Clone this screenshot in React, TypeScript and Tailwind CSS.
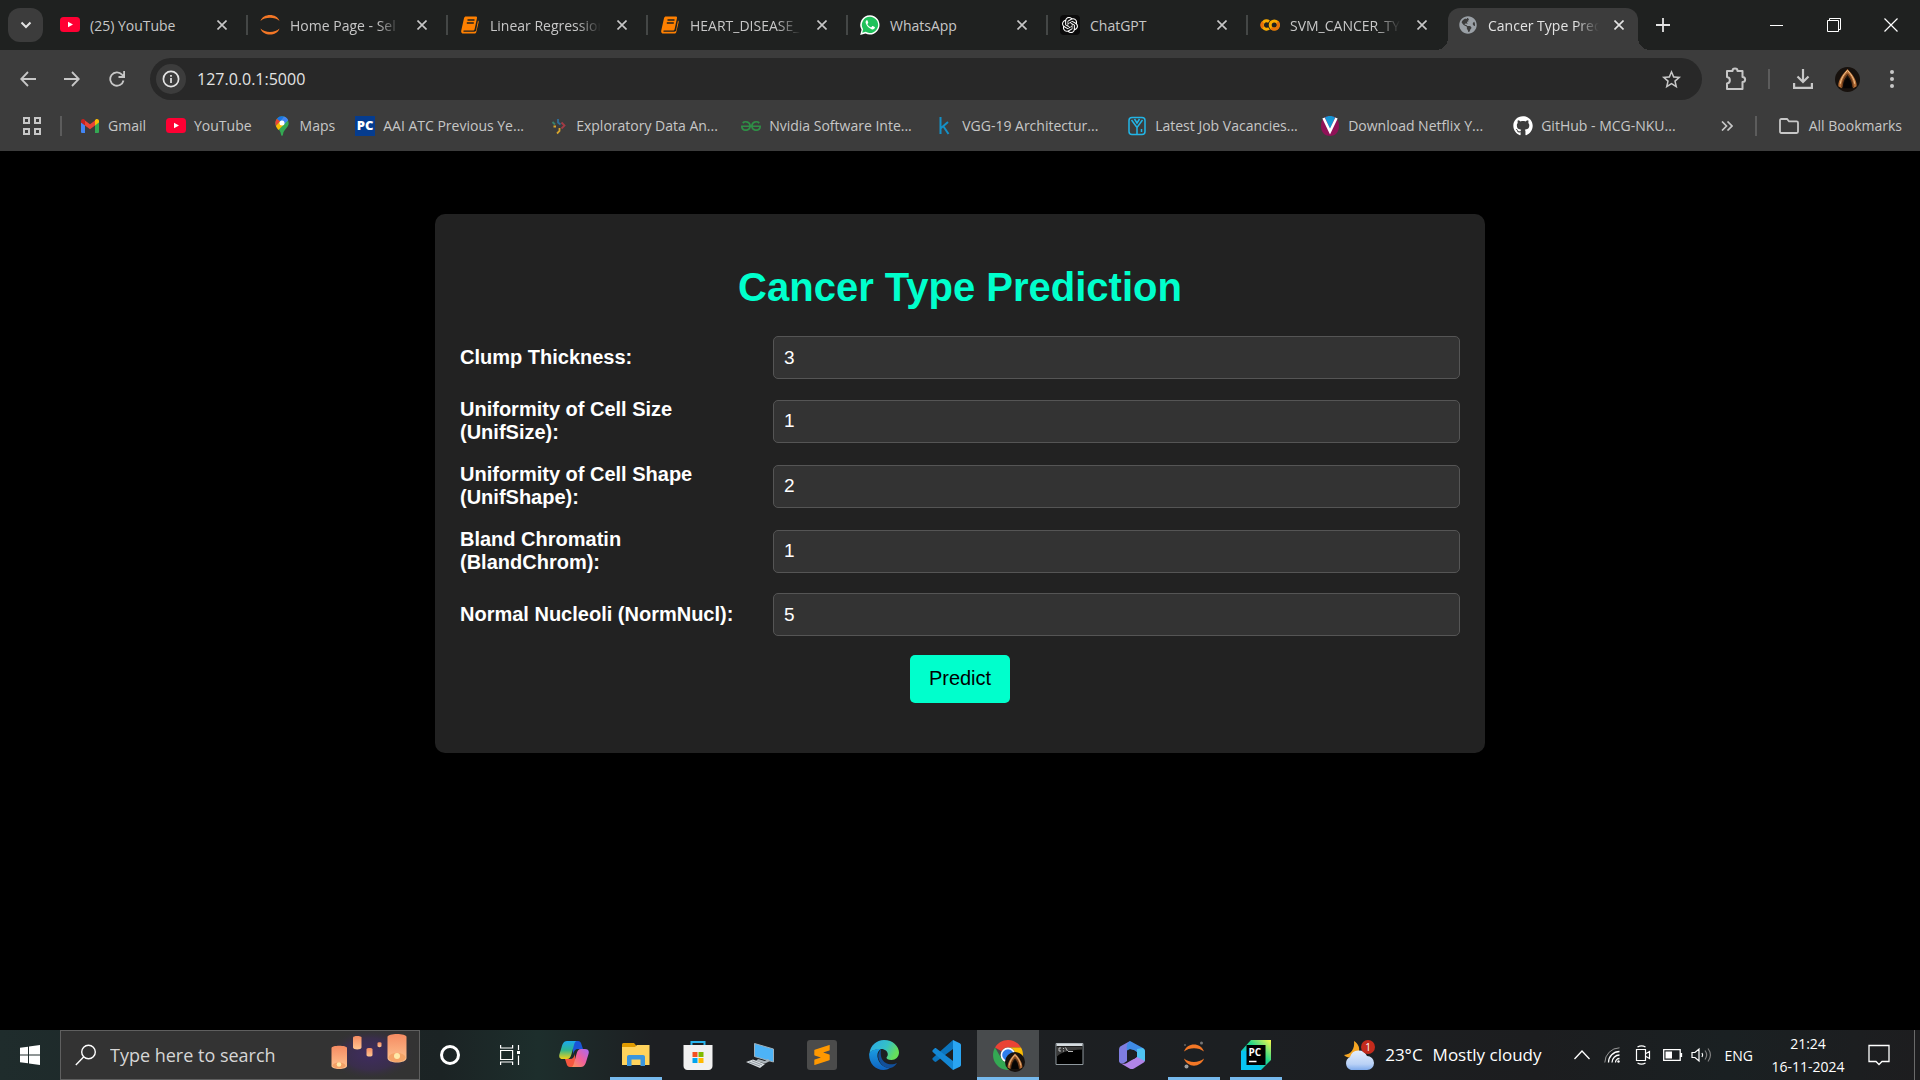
import React from "react";
import { FaGithub, FaGlobeAmericas } from "react-icons/fa";
import { SiOpenai, SiGeeksforgeeks, SiSublimetext } from "react-icons/si";
import { MdStarBorder } from "react-icons/md";

/* ---------- favicons ---------- */

const YouTube = () => (
  <svg viewBox="0 0 20 20" className="size-5">
    <rect x="0" y="2" width="20" height="15" rx="3.5" fill="#ff0033" />
    <path d="M8 6.7 13 9.5l-5 2.8z" fill="#fff" />
  </svg>
);

const JupyterArcs = () => (
  <svg viewBox="0 0 20 20" className="size-5" fill="#f37726">
    <path d="M0.5 6C3 -2 17 -2 19.5 6 15 1.6 5 1.6 .5 6z" />
    <path d="M0.5 13.500C3 21.5 17 21.5 19.5 13.5 15 18 5 18 .5 13.500z" />
  </svg>
);

const Notebook = () => (
  <svg viewBox="0 0 20 20" className="size-5">
    <path
      d="M6 1.500h9.700c1 0 1.500.6 1.300 1.500l-2.400 11.200c-.2.900-.8 1.400-1.800 1.400H4c-.9 0-1 1.100 0 1.100h10.300c1 0 1.500-.4 1.800-1.400L18 5.500c.6.500.8 1 .6 1.700l-2.300 9.800c-.3 1.200-1 1.600-2 1.600H3.400c-1.600 0-2.600-1.400-2.200-2.900L4 3.300C4.300 2 5 1.500 6 1.500z"
      fill="#ff8000"
    />
    <path d="M7.500 5h7M6.800 8h7" stroke="#1f2120" strokeWidth="1.3" />
  </svg>
);

const WhatsApp = () => (
  <svg viewBox="0 0 20 20" className="size-5">
    <path d="M10 .2a9.700 9.700 0 0 0-8.400 14.600L.2 20l5.300-1.400A9.700 9.700 0 1 0 10 .2z" fill="#fff" />
    <path d="M10 1.800a8.100 8.100 0 0 0-6.900 12.400l-.9 3.500 3.600-.9A8.100 8.100 0 1 0 10 1.800z" fill="#1fc15b" />
    <path
      d="M6.600 5.300c-.8.700-1.200 1.700-.9 2.800.8 3 3.300 5.400 6.300 6.300 1.200.3 2.400-.3 2.800-1.300.2-.6.2-.9-.1-1.100l-1.900-.9c-.3-.1-.5 0-.7.200l-.7.900c-.2.200-.4.200-.7.100a6.500 6.500 0 0 1-3.200-2.900c-.1-.3-.1-.4.100-.6l.6-.8c.1-.2.1-.4 0-.6L7.500 5.500c-.2-.4-.6-.4-.9-.2z"
      fill="#fff"
    />
  </svg>
);

const ChatGpt = () => (
  <span className="flex size-5 items-center justify-center rounded bg-[#0b0b0b] text-white">
    <SiOpenai className="size-4" />
  </span>
);

const Colab = () => (
  <svg viewBox="0 0 20 20" className="size-5" fill="none" strokeWidth="3">
    <path d="M9 6.600A4.200 4.200 0 1 0 9 13.400" stroke="#f9ab00" />
    <path d="M3 7.200a4.200 4.200 0 0 0 0 5.600" stroke="#e8710a" />
    <circle cx="14.3" cy="10" r="4.1" stroke="#f9ab00" />
    <path d="M11.400 12.900a4.100 4.100 0 0 0 5.800-5.800" stroke="#e8710a" />
  </svg>
);

const Globe = () => (
  <span className="flex size-5 items-center justify-center text-[#9aa0a6]">
    <FaGlobeAmericas className="size-[18px]" />
  </span>
);

const Gmail = () => (
  <svg viewBox="0 0 20 20" className="size-5">
    <path d="M1 17V6l4 3v8H2a1 1 0 0 1-1-1z" fill="#4285f4" />
    <path d="M15 17V9l4-3v10a1 1 0 0 1-1 1z" fill="#34a853" />
    <path d="M5 9.500V4.500l5 3.800 5-3.800v5l-5 3.800z" fill="#ea4335" />
    <path d="M1 6.500V5c0-1.900 2-2.700 3.300-1.600l.7.600v5.500z" fill="#c5221f" />
    <path d="M19 6.500V5c0-1.900-2-2.700-3.300-1.600l-.7.600v5.500z" fill="#fbbc04" />
  </svg>
);

const Maps = () => (
  <svg viewBox="0 0 20 20" className="size-5">
    <path d="M10 .3a6.700 6.700 0 0 0-6.700 6.700c0 4.800 5 6 5.700 11.400.2 1.700 1.800 1.700 2 0C11.700 13 16.700 11.800 16.700 7A6.700 6.700 0 0 0 10 .3z" fill="#34a853" />
    <path d="M10 .3c2.800 0 5.200 1.600 6.200 4L12 8.600 7.800 5.400l4-4.900z" fill="#4285f4" />
    <path d="M4.900 2.700A6.700 6.700 0 0 1 12 .6L7.800 5.600z" fill="#1a73e8" />
    <path d="M4.900 2.700 8.200 5.500 3.900 10C3 7.500 3.100 4.800 4.900 2.700z" fill="#ea4335" />
    <path d="m12 8.600-5.600 5.500C5.400 12.700 4.400 11.500 3.900 10l4-4.600z" fill="#fbbc04" />
    <circle cx="10" cy="7" r="2.5" fill="#fff" />
  </svg>
);

const PcBadge = () => (
  <span className="flex size-5 items-center justify-center bg-[#053c8f] font-['Open_Sans',sans-serif] text-[13px] font-extrabold text-white">
    PC
  </span>
);

const Chevrons = () => (
  <svg viewBox="0 0 20 20" className="size-5" fill="none" strokeWidth="1.8">
    <path d="M10 3v3.500l2.500 2" stroke="#2f6f9a" />
    <path d="M4.500 6 7 8.500" stroke="#39806d" />
    <path d="m13.500 6.500 3 3-3 3" stroke="#a33b45" />
    <path d="M5.500 10.500H8M9 17.500l2.500-2.500v-3" stroke="#d8a52c" />
  </svg>
);

const Kaggle = () => (
  <svg viewBox="0 0 20 20" className="size-5" fill="none" stroke="#1490c6" strokeWidth="2">
    <path d="M6.500 1v17M14 6l-7.500 6.500M9.500 10.500l5 7.500" />
  </svg>
);

const Jobs = () => (
  <svg viewBox="0 0 20 20" className="size-5" fill="none" stroke="#22b5e6" strokeWidth="1.5">
    <rect x="2" y="1.500" width="16" height="17" rx="3" />
    <path d="m4.500 4 5.500 7.500L15.500 4M10 11.500V18M7.500 3l2.500 4 2.500-4M14.500 13v3" />
  </svg>
);

const Vid = () => (
  <svg viewBox="0 0 20 20" className="size-5">
    <path d="M10 0C4 0 1 4 1 10s3.500 10 9 10 9-4 9-10S16 0 10 0z" fill="#8f1257" />
    <path d="M5 1.500C7-.5 13-.5 15 1.500L10 13z" fill="#1597d4" />
    <path d="m3.500 2 6.500 13.500L16.500 2" fill="none" stroke="#fff" strokeWidth="2.6" />
  </svg>
);

/* ---------- tab strip ---------- */

const Cross = () => (
  <svg viewBox="0 0 10 10" className="size-[10px]" fill="none" stroke="currentColor">
    <path d="m.5.5 9 9M9.500.5l-9 9" strokeWidth="1.6" />
  </svg>
);

type TabInfo = { title: string; icon: React.ReactNode; fade?: boolean };

const tabs: TabInfo[] = [
  { title: "(25) YouTube", icon: <YouTube /> },
  { title: "Home Page - Sel", icon: <JupyterArcs />, fade: true },
  { title: "Linear Regression", icon: <Notebook />, fade: true },
  { title: "HEART_DISEASE_", icon: <Notebook />, fade: true },
  { title: "WhatsApp", icon: <WhatsApp /> },
  { title: "ChatGPT", icon: <ChatGpt /> },
  { title: "SVM_CANCER_TY", icon: <Colab />, fade: true },
];

function TabTitle({ title, fade }: { title: string; fade?: boolean }) {
  return (
    <span
      className={
        fade
          ? "ml-[10px] w-[112px] whitespace-nowrap [mask-image:linear-gradient(90deg,#000_78%,transparent_99%)]"
          : "ml-[10px] w-[112px] whitespace-nowrap"
      }
    >
      {title}
    </span>
  );
}

function Tab({ title, icon, fade, last }: TabInfo & { last: boolean }) {
  return (
    <div className="flex h-[50px] w-[200px] shrink-0 items-center pl-3 text-[#c7c7c7]">
      {icon}
      <TabTitle title={title} fade={fade} />
      <button aria-label="Close tab" className="ml-[15px]">
        <Cross />
      </button>
      {!last && <span className="ml-auto h-5 w-[2px] bg-[#444746]" />}
    </div>
  );
}

function ActiveTab() {
  return (
    <div className="relative mt-2 flex h-[42px] w-[190px] shrink-0 items-center rounded-t-xl bg-[#3c3c3c] pb-2 pl-[10px] text-[#e3e3e3]">
      <span className="absolute -left-3 bottom-0 size-3 bg-[radial-gradient(circle_at_0_0,transparent_12px,#3c3c3c_12px)]" />
      <span className="absolute -right-3 bottom-0 size-3 bg-[radial-gradient(circle_at_100%_0,transparent_12px,#3c3c3c_12px)]" />
      <Globe />
      <TabTitle title="Cancer Type Pred" fade />
      <button aria-label="Close tab" className="ml-[14px]">
        <Cross />
      </button>
    </div>
  );
}

function TabStrip() {
  return (
    <div className="flex h-[50px] items-center bg-[#1f2120] pl-2 text-[14px]">
      <button aria-label="Search tabs" className="mr-[5px] flex h-[34px] w-[35px] shrink-0 items-center justify-center rounded-xl bg-[#3c3c3c] text-[#e3e3e3]">
        <svg viewBox="0 0 12 12" className="size-3" fill="none" stroke="currentColor" strokeWidth="2">
          <path d="m1.500 3.500 4.500 4.500 4.500-4.500" />
        </svg>
      </button>
      {tabs.map((t, i) => (
        <Tab key={t.title} {...t} last={i === tabs.length - 1} />
      ))}
      <ActiveTab />
      <button aria-label="New tab" className="ml-[18px] text-[#e3e3e3]">
        <svg viewBox="0 0 14 14" className="size-[14px]" stroke="currentColor" strokeWidth="1.8">
          <path d="M7 0v14M0 7h14" />
        </svg>
      </button>
      <div className="ml-auto flex items-center pr-[1px] text-white">
        <button aria-label="Minimize" className="flex h-[50px] w-[57px] items-center justify-center">
          <span className="h-px w-[13px] bg-white" />
        </button>
        <button aria-label="Restore" className="flex h-[50px] w-[57px] items-center justify-center">
          <svg viewBox="0 0 14 14" className="size-[14px]" fill="none" stroke="currentColor">
            <path d="M.5 2.500h11v11H.5zM2.500 2.500v-2h11v11h-2" />
          </svg>
        </button>
        <button aria-label="Close" className="flex h-[50px] w-[57px] items-center justify-center">
          <svg viewBox="0 0 14 14" className="size-[14px]" fill="none" stroke="currentColor" strokeWidth="1.2">
            <path d="m.5.5 13 13M13.500.5l-13 13" />
          </svg>
        </button>
      </div>
    </div>
  );
}

/* ---------- toolbar ---------- */

const Avatar = () => (
  <svg viewBox="0 0 26 26" className="size-full">
    <circle cx="13" cy="13" r="13" fill="#17110d" />
    <path d="M13 2C8 7 3 14 3.500 20l3.500 2c0-6 2-10 6-14 4 4 6 8 6 14l3.500-2C23 14 18 7 13 2z" fill="#b87038" />
    <path d="M13 3.500c-4 4-7 9-7.500 14M13 3.500c4 4 7 9 7.500 14" fill="none" stroke="#f3c48e" strokeWidth="1" />
    <path d="M13 7c-3.500 3.500-5.500 8-5.800 14M13 7c3.500 3.500 5.500 8 5.800 14" fill="none" stroke="#6b3a19" strokeWidth="1.5" />
    <path d="M13 11c-3 3-4.500 6-4.500 11h9c0-5-1.500-8-4.500-11z" fill="#050404" />
  </svg>
);

function Toolbar() {
  return (
    <div className="flex h-[58px] items-center bg-[#3c3c3c] pl-5 pr-[26px] text-[#c7c7c7]">
      <button aria-label="Back">
        <svg viewBox="0 0 16 16" className="size-4" fill="none" stroke="currentColor" strokeWidth="1.8">
          <path d="M16 8H1.500M8 1 1.200 8 8 15" />
        </svg>
      </button>
      <button aria-label="Forward" className="ml-7">
        <svg viewBox="0 0 16 16" className="size-4" fill="none" stroke="currentColor" strokeWidth="1.8">
          <path d="M0 8h14.500M8 1l6.800 7L8 15" />
        </svg>
      </button>
      <button aria-label="Reload" className="ml-[29px]">
        <svg viewBox="0 0 16 16" className="size-4" fill="none" stroke="currentColor" strokeWidth="1.8">
          <path d="M14.500 9.500A6.700 6.700 0 1 1 13 3.600L15 5.500M15.100 0v6H9.500" />
        </svg>
      </button>
      <div className="ml-[25px] flex h-[42px] min-w-0 flex-1 items-center rounded-full bg-[#282828] pl-[6px] pr-[19px]">
        <button aria-label="Site information" className="flex size-[30px] shrink-0 items-center justify-center rounded-full bg-[#3c3c3c] text-[#e3e3e3]">
          <svg viewBox="0 0 18 18" className="size-[18px]" fill="none" stroke="currentColor" strokeWidth="1.7">
            <circle cx="9" cy="9" r="7.6" />
            <path d="M9 8v5M9 5v1.700" />
          </svg>
        </button>
        <input aria-label="Address" defaultValue="127.0.0.1:5000" className="ml-[11px] min-w-0 flex-1 bg-transparent text-[16px] text-[#e3e3e3] outline-none" />
        <button aria-label="Bookmark this page">
          <MdStarBorder className="size-[23px]" />
        </button>
      </div>
      <button aria-label="Extensions" className="ml-[23px]">
        <svg viewBox="0 0 22 24" className="h-6 w-[22px]" fill="none" stroke="currentColor" strokeWidth="2">
          <path d="M2 4h5.500c0-3.300 5-3.300 5 0H17.500v6c3.500 0 3.500 5 0 5v7H2v-5.500c3.800-.5 3.800-6 0-6.500z" strokeLinejoin="round" />
        </svg>
      </button>
      <span className="ml-[21px] h-5 w-[2px] bg-[#5c5c5c]" />
      <button aria-label="Downloads" className="ml-[23px]">
        <svg viewBox="0 0 20 20" className="size-5" fill="none" stroke="currentColor" strokeWidth="2.2">
          <path d="M10 0v12.500M4.500 7.500 10 13l5.500-5.500M1.100 14v4.900h17.800V14" />
        </svg>
      </button>
      <button aria-label="Profile" className="ml-[22px] size-[25px]">
        <Avatar />
      </button>
      <button aria-label="Menu" className="ml-[30px]">
        <svg viewBox="0 0 4 18" className="h-[18px] w-1" fill="currentColor">
          <circle cx="2" cy="2" r="2" />
          <circle cx="2" cy="9" r="2" />
          <circle cx="2" cy="16" r="2" />
        </svg>
      </button>
    </div>
  );
}

const shortMarks = [
  { title: "Gmail", icon: <Gmail /> },
  { title: "YouTube", icon: <YouTube /> },
  { title: "Maps", icon: <Maps /> },
];

const longMarks = [
  { title: "AAI ATC Previous Ye...", icon: <PcBadge /> },
  { title: "Exploratory Data An...", icon: <Chevrons /> },
  { title: "Nvidia Software Inte...", icon: <SiGeeksforgeeks className="size-5 text-[#2f8d46]" /> },
  { title: "VGG-19 Architectur...", icon: <Kaggle /> },
  { title: "Latest Job Vacancies...", icon: <Jobs /> },
  { title: "Download Netflix Y...", icon: <Vid /> },
  { title: "GitHub - MCG-NKU...", icon: <FaGithub className="size-5 text-white" /> },
];

function Bookmarks() {
  return (
    <nav className="flex h-[43px] items-center whitespace-nowrap bg-[#3c3c3c] pb-2 pl-[22px] pr-[18px] text-[14px] text-[#c7c7c7]">
      <button aria-label="Apps">
        <svg viewBox="0 0 20 20" className="size-5" fill="none" stroke="currentColor" strokeWidth="2">
          <path d="M2 2h5v5H2zM13 2h5v5h-5zM2 13h5v5H2zM13 13h5v5h-5z" />
        </svg>
      </button>
      <span className="mx-[18px] h-5 w-[2px] bg-[#5c5c5c]" />
      <div className="flex gap-5">
        {shortMarks.map((m) => (
          <a key={m.title} href="#" className="flex items-center gap-2">
            {m.icon}
            <span>{m.title}</span>
          </a>
        ))}
        {longMarks.map((m) => (
          <a key={m.title} href="#" className="flex items-center gap-2">
            {m.icon}
            <span className="w-[145px]">{m.title}</span>
          </a>
        ))}
      </div>
      <button aria-label="More bookmarks" className="ml-auto">
        <svg viewBox="0 0 12 10" className="h-[10px] w-3" fill="none" stroke="currentColor" strokeWidth="1.7">
          <path d="m1 .5 4.500 4.500L1 9.500M6.500.5 11 5 6.500 9.500" />
        </svg>
      </button>
      <span className="ml-[22px] h-5 w-[2px] bg-[#5c5c5c]" />
      <a href="#" className="ml-[22px] flex items-center gap-[10px]">
        <svg viewBox="0 0 20 16" className="h-4 w-5" fill="none" stroke="currentColor" strokeWidth="1.8">
          <path d="M1 13.500v-11C1 1.600 1.500 1 2.400 1H8l2 2.300h7.600c.9 0 1.400.6 1.400 1.400v8.800c0 .9-.5 1.500-1.400 1.500H2.400C1.500 15 1 14.400 1 13.500z" />
        </svg>
        <span>All Bookmarks</span>
      </a>
    </nav>
  );
}

/* ---------- page ---------- */

const fields = [
  { id: "clump", label: "Clump Thickness:", value: "3" },
  { id: "unifsize", label: "Uniformity of Cell Size (UnifSize):", value: "1" },
  { id: "unifshape", label: "Uniformity of Cell Shape (UnifShape):", value: "2" },
  { id: "blandchrom", label: "Bland Chromatin (BlandChrom):", value: "1" },
  { id: "normnucl", label: "Normal Nucleoli (NormNucl):", value: "5" },
];

function PredictionPage() {
  return (
    <main className="flex-1 bg-black pt-[63px] font-['Liberation_Sans',Arial,sans-serif]">
      <div className="mx-auto max-w-[1050px] rounded-[10px] bg-[#222222] px-[25px] py-[50px]">
        <h1 className="mb-[26px] text-center text-[40px] font-bold leading-[46px] text-[#00ffcc]">
          Cancer Type Prediction
        </h1>
        <form className="flex flex-col gap-[19px]" onSubmit={(e) => e.preventDefault()}>
          {fields.map((f) => (
            <div key={f.id} className="flex items-center">
              <label htmlFor={f.id} className="w-[300px] shrink-0 text-[20px] font-bold leading-[23px] text-white">
                {f.label}
              </label>
              <input
                id={f.id}
                defaultValue={f.value}
                className="ml-[13px] h-[43px] min-w-0 flex-1 rounded-[5px] border border-[#555555] bg-[#333333] px-[10px] text-[19px] text-white outline-none"
              />
            </div>
          ))}
          <button className="mx-auto h-12 w-[100px] rounded-[5px] bg-[#00ffcc] pb-[2px] text-[20px] text-black">Predict</button>
        </form>
      </div>
    </main>
  );
}

/* ---------- taskbar ---------- */

const Lanterns = () => (
  <svg viewBox="0 0 90 48" className="h-12 w-[90px]">
    <defs>
      <radialGradient id="glow">
        <stop offset="0" stopColor="#3f2c60" />
        <stop offset=".6" stopColor="#3a2e4c" />
        <stop offset="1" stopColor="#333333" stopOpacity="0" />
      </radialGradient>
      <linearGradient id="lamp" x1="0" y1="0" x2="0" y2="1">
        <stop offset="0" stopColor="#f58b62" />
        <stop offset="1" stopColor="#ffc591" />
      </linearGradient>
    </defs>
    <ellipse cx="42" cy="23" rx="44" ry="26" fill="url(#glow)" />
    <g fill="url(#lamp)">
      <path d="M2.500 17c0-3 15.500-3 15.500 0v18c0 4-15.500 4-15.500 0z" />
      <path d="M24 6.500c0-2 8.500-2 8.500 0v10c0 2.500-8.500 2.500-8.500 0z" />
      <path d="M37.500 18c0-1.500 6-1.500 6 0v6c0 2-6 2-6 0z" />
      <path d="M48.500 12c0-1 4-1 4 0v3c0 1.500-4 1.500-4 0z" />
      <path d="M58.500 6c0-4 19-4 19 0v21c0 6-19 6-19 0z" />
    </g>
    <ellipse cx="10" cy="34.500" rx="6.500" ry="3" fill="#f3a066" />
    <ellipse cx="68" cy="26.500" rx="8.500" ry="4.500" fill="#f5a468" />
    <circle cx="10" cy="33.500" r="2.300" fill="#ffe9a8" />
    <circle cx="68" cy="25" r="3" fill="#ffe9a8" />
  </svg>
);

const Copilot = () => (
  <svg viewBox="0 0 30 30" className="size-[30px]">
    <defs>
      <linearGradient id="cpA" x1="0" y1="0" x2="0" y2="1">
        <stop offset="0" stopColor="#1aa7f0" />
        <stop offset=".5" stopColor="#2fb58f" />
        <stop offset="1" stopColor="#f2d117" />
      </linearGradient>
      <linearGradient id="cpB" x1="1" y1="0" x2="0" y2="1">
        <stop offset="0" stopColor="#a76af5" />
        <stop offset=".5" stopColor="#f0609c" />
        <stop offset="1" stopColor="#fb9a52" />
      </linearGradient>
    </defs>
    <path d="M14 1h5c2 0 3 1.500 3.500 3.500L24 9h-5c-3 0-4 2-5 5z" fill="#1a55d8" />
    <path d="M16 27h-5c-2 0-3-1.500-3.500-3.500L6 19h5c3 0 4-2 5-5z" fill="#f4573f" />
    <path d="M18 1H8C4.500 1 3.500 4 2.500 7.500L.5 14c-1 3.500.5 5 3.500 5h4c2.500 0 3.500-1.500 4.500-5l2.500-9c.6-2.400 1.500-4 3-4z" fill="url(#cpA)" />
    <path d="M12 27h10c3.500 0 4.500-3 5.500-6.500l2-6.500c1-3.500-.5-5-3.500-5h-4c-2.500 0-3.500 1.500-4.500 5L15 23c-.6 2.400-1.500 4-3 4z" fill="url(#cpB)" />
  </svg>
);

const Explorer = () => (
  <svg viewBox="0 0 30 30" className="size-[30px]">
    <path d="M1 4.500C1 4 1.500 3 2.500 3H13l2.500 3V12H1z" fill="#e09b00" />
    <path d="M1 7h13l2-2h12.500v20H1z" fill="#ffd35c" />
    <path d="M6 26V17c0-1.200.8-2 2-2h14c1.200 0 2 .8 2 2v9h-4.500v-6.500h-9V26z" fill="#3a95dd" />
  </svg>
);

const Store = () => (
  <svg viewBox="0 0 30 30" className="size-[30px]">
    <path d="M8.500 7V2h13v5" fill="none" stroke="#28b4ee" strokeWidth="2" />
    <path d="M.5 5h29v21c0 2-1.500 4-4 4h-21c-2.500 0-4-2-4-4z" fill="#f1f1f1" />
    <path d="M9.500 12h5v5h-5z" fill="#f25022" />
    <path d="M15.500 12h5v5h-5z" fill="#7fba00" />
    <path d="M9.500 18h5v5h-5z" fill="#00a4ef" />
    <path d="M15.500 18h5v5h-5z" fill="#ffb900" />
  </svg>
);

const RemotePc = () => (
  <svg viewBox="0 0 30 30" className="size-[30px]">
    <path d="m9.500 3.500 19 5.500v13L9.500 16.500z" fill="#4db3f7" stroke="#9fb0bb" strokeWidth="1" />
    <path d="m13 19 7 2 3-2 2 2-5 2.500-9-2.500z" fill="#aab2b8" />
    <path d="m1 22 7-2.500L20 24l-5 4z" fill="#d7dce0" />
    <path d="m4 22 11 4M7 20.800l10 4" stroke="#7f888f" strokeWidth=".8" />
  </svg>
);

const Sublime = () => (
  <span className="flex size-[30px] items-center justify-center rounded-[3px] bg-[#4b4b4b] text-[#ff9800]">
    <SiSublimetext className="size-5" />
  </span>
);

const Edge = () => (
  <svg viewBox="0 0 30 30" className="size-[30px]">
    <defs>
      <linearGradient id="edA" x1="0" y1="0" x2="1" y2=".4">
        <stop offset="0" stopColor="#2aa6ea" />
        <stop offset=".6" stopColor="#35c1c6" />
        <stop offset="1" stopColor="#66de5a" />
      </linearGradient>
      <linearGradient id="edB" x1="0" y1="0" x2="0" y2="1">
        <stop offset="0" stopColor="#1b9de2" />
        <stop offset="1" stopColor="#0f62c0" />
      </linearGradient>
    </defs>
    <path d="M.5 13C1.500 5.500 7.500 0 15 0c9 0 15 6.500 15 12.500 0 4.500-3.500 7.500-7.500 7.500-3.500 0-5-1.300-5-2.200 0-.8 1.300-1.300 1.300-3.600 0-2.800-3-5.200-6.300-5.200C6.500 9 2 11 .5 13z" fill="url(#edA)" />
    <path d="M.2 13.500C2 10 7 8.500 12 9c-3 1.500-4 5-3.500 8C9.500 23.500 15 28 21 28c-1.800 1.300-4 2-6.500 2C6 30-.6 22.500.2 13.500z" fill="url(#edB)" />
    <path d="M12 9.500c-2.800 2.500-3.500 6.500-2 10.500 2 5.500 7 8.500 11.500 8 3-.4 5.500-3 6.500-5-5 2.500-13 1.500-15.500-5-1-3-.8-6-.5-8.500z" fill="#124f99" />
  </svg>
);

const VsCode = () => (
  <svg viewBox="0 0 30 30" className="size-[30px]">
    <path d="m22 0-20 17.800c-.8.700-.8 1.500-.1 2.200l1.600 1.500c.6.500 1.300.5 1.900.1L26 6z" fill="#0b74bd" />
    <path d="m22 30-20-17.800c-.8-.7-.8-1.500-.1-2.200l1.600-1.500c.6-.5 1.300-.5 1.900-.1L26 24z" fill="#1487d4" />
    <path d="m22 0 6.800 3.200c.8.400 1.200 1 1.200 1.800v20c0 .8-.4 1.400-1.200 1.800L22 30z" fill="#2aa5f2" />
  </svg>
);

const Chrome = () => (
  <span className="relative">
    <svg viewBox="0 0 30 30" className="size-[30px]">
      <path d="M15 0c5.600 0 10.400 3 13 7.500H15A7.500 7.500 0 0 0 8.500 11.200L2 7.500C4.600 3 9.400 0 15 0z" fill="#ea4335" />
      <path d="M28 7.500c4 7 1.500 15-4 19.500-3 2.300-6 3-9 3l6.500-11.200A7.500 7.500 0 0 0 15 7.500z" fill="#fbbc04" />
      <path d="M2 7.500C-2 15 .5 23 6 27c3 2.300 6 3 9 3l6.500-11.200a7.500 7.500 0 0 1-13 0z" fill="#34a853" />
      <circle cx="15" cy="15" r="7.4" fill="#fff" />
      <circle cx="15" cy="15" r="5.8" fill="#2f7ded" />
    </svg>
    <span className="absolute -bottom-[2px] -right-[2px] size-5">
      <Avatar />
    </span>
  </span>
);

const Terminal = () => (
  <svg viewBox="0 0 30 30" className="size-[30px]">
    <path d="M1 3.500h27v21H1z" fill="#000" stroke="#8f989e" />
    <path d="M1.500 3.500h26V6h-26z" fill="#d5dbdf" />
    <path d="M1.500 6.500h26v3C14 10 6 12 1.500 17z" fill="#3a3a3a" />
    <path d="M6 8H4v3h2M8 8.500h1M8 11h1M10.500 7.500l2 3.500M13 11.500h5" fill="none" stroke="#ccc" strokeWidth=".9" />
  </svg>
);

const M365 = () => (
  <svg viewBox="0 0 30 30" className="size-[30px]">
    <path d="M13 1 4 6c-1.700 1-2 2.500-2 4v11c0 2 2.500 3.500 5 2l3-2V9.500z" fill="#7f7de0" />
    <path d="m13 1 12.500 6.800C27.500 9 28 10 28 12v9L20 18v-6L13 9l-3 1.500C9 6 10 3 13 1z" fill="#3f8be6" />
    <path d="M28 11v9c0 1.500-1 2.500-2 3l-9 5.500c-1.500.8-3 .8-4.500 0L4 23.500c3 .8 5 0 7-1.300l9-5.200z" fill="#b184e8" />
    <path d="m20 9 5.500-1C27.500 9 28 10 28 12v9l-8-4z" fill="#4fc3f2" />
    <circle cx="15" cy="14.500" r="4.800" fill="#1d1f22" />
  </svg>
);

const JupyterApp = () => (
  <svg viewBox="0 0 30 30" className="size-[30px]">
    <path d="M5 11.500C8 2 22 2 25 11.500 20 7 10 7 5 11.500z" fill="#f37726" />
    <path d="M5 18.500C8 28 22 28 25 18.500 20 23 10 23 5 18.500z" fill="#f37726" />
    <circle cx="22.500" cy="3" r="1.5" fill="#767677" />
    <circle cx="6" cy="5" r="1" fill="#616262" />
    <circle cx="7.500" cy="26.500" r="2" fill="#9e9e9e" />
  </svg>
);

const PyCharm = () => (
  <svg viewBox="0 0 30 30" className="size-[30px]">
    <defs>
      <linearGradient id="pyc" x1=".2" y1=".8" x2="1" y2="0">
        <stop offset="0" stopColor="#07c3f2" />
        <stop offset=".5" stopColor="#21d789" />
        <stop offset="1" stopColor="#fcf84a" />
      </linearGradient>
    </defs>
    <path d="M10 0h20v20L20 30H0V11z" fill="url(#pyc)" />
    <path d="M0 11h12l8 19H0z" fill="#07c3f2" />
    <rect x="5.5" y="5" width="19" height="20" fill="#000" />
    <text x="7.5" y="16" fill="#fff" fontSize="10" fontWeight="700" fontFamily="Open Sans, sans-serif">PC</text>
    <path d="M8 21.500h7.500" stroke="#fff" strokeWidth="1.5" />
  </svg>
);

type TaskApp = { name: string; icon: React.ReactNode; state?: "open" | "active" };

const apps: TaskApp[] = [
  { name: "Copilot", icon: <Copilot /> },
  { name: "File Explorer", icon: <Explorer />, state: "open" },
  { name: "Microsoft Store", icon: <Store /> },
  { name: "Remote PC", icon: <RemotePc /> },
  { name: "Sublime Text", icon: <Sublime /> },
  { name: "Edge", icon: <Edge /> },
  { name: "Visual Studio Code", icon: <VsCode /> },
  { name: "Chrome", icon: <Chrome />, state: "active" },
  { name: "Terminal", icon: <Terminal /> },
  { name: "Microsoft 365", icon: <M365 /> },
  { name: "Jupyter", icon: <JupyterApp />, state: "open" },
  { name: "PyCharm", icon: <PyCharm />, state: "open" },
];

function TaskButton({ name, icon, state }: TaskApp) {
  return (
    <button
      aria-label={name}
      className={
        state === "active"
          ? "relative flex w-[62px] items-center justify-center bg-[#484b4d]"
          : "relative flex w-[62px] items-center justify-center"
      }
    >
      {icon}
      {state === "open" && <span className="absolute inset-x-[5px] bottom-0 h-[3px] bg-[#76b9ed]" />}
      {state === "active" && <span className="absolute inset-x-0 bottom-0 h-[3px] bg-[#76b9ed]" />}
    </button>
  );
}

const Weather = () => (
  <span className="relative">
    <svg viewBox="0 0 32 36" className="h-9 w-8">
      <defs>
        <linearGradient id="cloud" x1="0" y1="0" x2="0" y2="1">
          <stop offset="0" stopColor="#e4eefc" />
          <stop offset=".7" stopColor="#b9d1f6" />
          <stop offset="1" stopColor="#7fabec" />
        </linearGradient>
      </defs>
      <path d="M11 4c4 2.500 7 7 4 13-3 4-10 5-14 1 7-.5 11-6 10-14z" fill="#f5a623" />
      <path d="M8 33a7 7 0 0 1-1-13 9 9 0 0 1 17-1 7 7 0 0 1 0 14z" fill="url(#cloud)" />
    </svg>
    <span className="absolute right-0 top-[3px] flex size-[14px] items-center justify-center rounded-full bg-[#c42b1c] text-[10px] text-white">1</span>
  </span>
);

function Tray() {
  return (
    <div className="ml-auto flex items-center text-white">
      <button className="flex items-center text-[17px]">
        <Weather />
        <span className="ml-[10px]">23°C</span>
        <span className="ml-[10px] whitespace-nowrap">Mostly cloudy</span>
      </button>
      <button aria-label="Show hidden icons" className="ml-[32px]">
        <svg viewBox="0 0 16 10" className="h-[10px] w-4" fill="none" stroke="currentColor" strokeWidth="1.3">
          <path d="m.5 9 7.500-8 7.500 8" />
        </svg>
      </button>
      <svg viewBox="0 0 16 16" className="ml-[14px] size-4" fill="none" stroke="currentColor">
        <path d="M.8 15.500A15 15 0 0 1 15.500.8" stroke="#9a9a9a" />
        <path d="M4.500 15.500a11 11 0 0 1 11-11M8 15.500A7.500 7.500 0 0 1 15.500 8M11.500 15.500a4 4 0 0 1 4-4" strokeWidth="1.3" />
        <circle cx="14.500" cy="14.500" r="1.2" fill="currentColor" stroke="none" />
      </svg>
      <svg viewBox="0 0 16 20" className="ml-[15px] h-5 w-4" fill="none" stroke="currentColor" strokeWidth="1.2">
        <path d="M1.500 4.500h9v11h-9zM11 8.500l3.500-2v7L11 11.500M2.500 2c2.500-1.500 5.500-1.500 8 0M2.500 18c2.500 1.500 5.500 1.500 8 0" />
      </svg>
      <svg viewBox="0 0 20 12" className="ml-3 h-3 w-5" fill="none" stroke="currentColor" strokeWidth="1.3">
        <path d="M.7.7h16.500v10.600H.7zM18.500 4v4" />
        <path d="M2.500 2.500H9v7H2.500z" fill="currentColor" stroke="none" />
      </svg>
      <svg viewBox="0 0 22 16" className="ml-2 h-4 w-[22px]" fill="none" stroke="currentColor" strokeWidth="1.2">
        <path d="M1 5.500h3L8 2v12l-4-3.500H1zM11 6c.8 1.200.8 2.800 0 4" />
        <path d="M14 3.500c2 2.700 2 6.300 0 9M17 1.500c3 4 3 9 0 13" stroke="#808080" />
      </svg>
      <span className="ml-3 text-[14px]">ENG</span>
      <div className="ml-4 w-[78px] whitespace-nowrap text-center text-[14px] leading-[23px]">
        <div>21:24</div>
        <div>16-11-2024</div>
      </div>
      <button aria-label="Notifications" className="ml-[21px] mr-6">
        <svg viewBox="0 0 22 22" className="size-[22px]" fill="none" stroke="currentColor" strokeWidth="1.3">
          <path d="M1 1.500h20v16h-7l-3 3-3-3H1z" />
        </svg>
      </button>
      <span className="mr-[5px] h-[50px] w-px bg-[#6a6a6a]" />
    </div>
  );
}

function Taskbar() {
  return (
    <footer className="flex h-[50px] items-stretch bg-[linear-gradient(90deg,#1f2c2c_0%,#1b2324_23%,#1d2e2c_28%,#1d1f22_34%,#1d1f22_48%,#1c1f22_65%,#1c1d1f_80%,#1a2022_90%,#1d1d1f_100%)]">
      <button aria-label="Start" className="flex w-[60px] items-center justify-center">
        <svg viewBox="0 0 20 20" className="size-5" fill="#fff">
          <path d="M0 2.800 8 1.700v7.800H0zM9 1.500 20 0v9.500H9zM0 10.500h8v7.800l-8-1.100zM9 10.500h11V20L9 18.500z" />
        </svg>
      </button>
      <div className="flex w-[360px] items-center border border-[#5f5f5f] bg-[#333333] pl-[14px]">
        <svg viewBox="0 0 22 22" className="size-[22px] shrink-0 text-white" fill="none" stroke="currentColor" strokeWidth="1.4">
          <circle cx="13.500" cy="8" r="6.8" />
          <path d="M8.800 12.800.8 21" />
        </svg>
        <input aria-label="Search" placeholder="Type here to search" className="ml-[13px] min-w-0 flex-1 bg-transparent text-[18px] outline-none placeholder:text-[#d6d6d6]" />
        <Lanterns />
      </div>
      <button aria-label="Cortana" className="flex w-[60px] items-center justify-center">
        <span className="size-5 rounded-full border-[3px] border-white" />
      </button>
      <button aria-label="Task view" className="mr-[3px] flex w-[60px] items-center justify-center">
        <svg viewBox="0 0 20 20" className="size-5" fill="none" stroke="#fff" strokeWidth="1.2">
          <path d="M.6 0v3h12V0M.6 5.500h12v9H.6zM.6 20v-3h12v3M18.500 0v5M18.500 10.500V20" />
          <path d="M17 6h3v3h-3z" fill="#fff" stroke="none" />
        </svg>
      </button>
      {apps.map((a) => (
        <TaskButton key={a.name} {...a} />
      ))}
      <Tray />
    </footer>
  );
}

export default function App() {
  return (
    <div className="flex min-h-screen flex-col bg-black font-['Open_Sans','Noto_Sans',sans-serif]">
      <header>
        <TabStrip />
        <Toolbar />
        <Bookmarks />
      </header>
      <PredictionPage />
      <Taskbar />
    </div>
  );
}
